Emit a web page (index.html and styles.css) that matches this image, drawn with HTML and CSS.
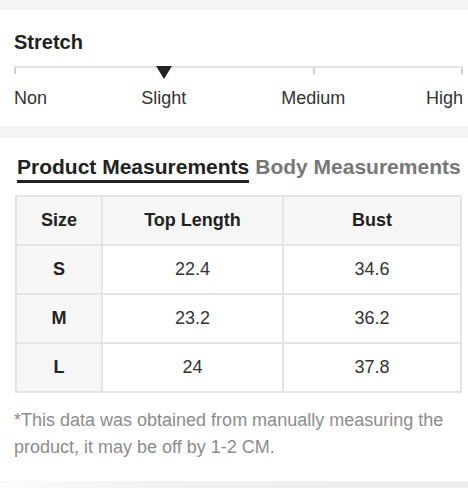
FILE: index.html
```html
<!DOCTYPE html>
<html lang="en">
<head>
<meta charset="utf-8">
<title>Size Info</title>
<link rel="stylesheet" href="styles.css">
</head>
<body>
<section class="card stretch">
  <h2 class="stretch-title">Stretch</h2>
  <div class="track">
    <span class="marker"></span>
  </div>
  <div class="scale-labels">
    <span class="lbl lbl-non">Non</span>
    <span class="lbl lbl-slight">Slight</span>
    <span class="lbl lbl-medium">Medium</span>
    <span class="lbl lbl-high">High</span>
  </div>
</section>
<section class="card measure">
  <div class="tabs">
    <span class="tab tab-active">Product Measurements</span>
    <span class="tab">Body Measurements</span>
  </div>
  <div class="size-table">
    <div class="cell head">Size</div>
    <div class="cell head">Top Length</div>
    <div class="cell head">Bust</div>
    <div class="cell size">S</div>
    <div class="cell">22.4</div>
    <div class="cell">34.6</div>
    <div class="cell size">M</div>
    <div class="cell">23.2</div>
    <div class="cell">36.2</div>
    <div class="cell size">L</div>
    <div class="cell">24</div>
    <div class="cell">37.8</div>
  </div>
  <p class="note">*This data was obtained from manually measuring the product, it may be off by 1-2 CM.</p>
</section>
<div class="bottom-band"></div>
</body>
</html>
```
FILE: styles.css
```css
html, body {
  margin: 0;
  padding: 0;
}
body {
  background: #f5f5f5;
  font-family: "Liberation Sans", Arial, sans-serif;
  color: #222;
  height: 488px;
  overflow: hidden;
}
.card {
  background: #fff;
}
.stretch {
  margin-top: 10px;
  padding: 20px 5px 17px 14px;
}
.stretch-title {
  margin: 0;
  font-size: 20px;
  line-height: 24px;
  font-weight: bold;
  color: #222;
}
.track {
  position: relative;
  margin-top: 12px;
  height: 12px;
  background-image:
    linear-gradient(#e3e3e3, #e3e3e3),
    linear-gradient(#cfcfcf, #cfcfcf),
    linear-gradient(#cfcfcf, #cfcfcf),
    linear-gradient(#cfcfcf, #cfcfcf);
  background-size: 100% 2px, 2px 8px, 2px 8px, 2px 8px;
  background-position: 0 0, 0 0, 66.8% 0, 100% 0;
  background-repeat: no-repeat;
}
.marker {
  position: absolute;
  top: 0;
  left: 33.4%;
  transform: translateX(-50%);
  width: 0;
  height: 0;
  border-left: 8.5px solid transparent;
  border-right: 8.5px solid transparent;
  border-top: 13px solid #222;
}
.scale-labels {
  margin-top: 9px;
  display: grid;
  grid-template-columns: repeat(6, 1fr);
  font-size: 18px;
  line-height: 22px;
  color: #333;
}
.lbl-non { grid-column: 1; justify-self: start; }
.lbl-slight { grid-column: 2 / span 2; justify-self: center; }
.lbl-medium { grid-column: 4 / span 2; justify-self: center; }
.lbl-high { grid-column: 6; justify-self: end; }

.measure {
  margin-top: 12px;
  padding: 17px 6px 20px 15px;
}
.tabs {
  display: flex;
  gap: 6px;
  padding-left: 2px;
  font-size: 21px;
  line-height: 24px;
  font-weight: bold;
  white-space: nowrap;
}
.tab {
  color: #777;
  padding-bottom: 1px;
  border-bottom: 3px solid transparent;
}
.tab-active {
  color: #222;
  border-bottom-color: #222;
}
.size-table {
  margin-top: 12px;
  display: grid;
  grid-template-columns: 84px 179px 1fr;
  grid-auto-rows: 47px;
  gap: 2px;
  padding: 2px;
  background: #e4e4e4;
}
.cell {
  background: #fff;
  display: flex;
  align-items: center;
  justify-content: center;
  font-size: 18px;
  color: #333;
}
.head {
  background: #f6f6f6;
  font-weight: bold;
  color: #222;
}
.size {
  background: #f6f6f6;
  font-weight: bold;
  color: #222;
}
.note {
  margin: 14px 0 0 -1px;
  font-size: 18px;
  line-height: 27px;
  color: #8c8c8c;
}
.bottom-band {
  height: 8px;
  background: linear-gradient(to right, #fbfbfb, #f0f0f0 40%, #eeeeee);
}
```
